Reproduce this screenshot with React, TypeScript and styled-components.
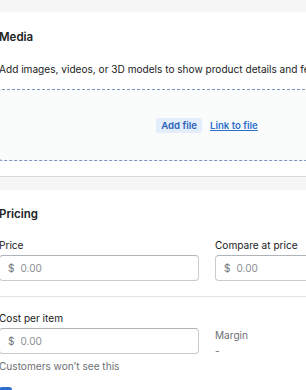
import styled, { createGlobalStyle } from 'styled-components';

const GlobalStyle = createGlobalStyle`
  html, body {
    margin: 0;
    padding: 0;
    background: #f6f6f7;
    overflow: hidden;
  }
  body {
    font-family: Inter, 'Liberation Sans', sans-serif;
    color: #202223;
  }
`;

const Page = styled.div`
  width: 456px;
  margin-left: -21px;
  padding-top: 12px;
  display: flex;
  flex-direction: column;
  gap: 14px;
`;

const Card = styled.section`
  background: #ffffff;
  box-shadow: 0 1px 0 rgba(0, 0, 0, 0.12);
`;

const Section = styled.div<{ $top?: number; $bottom?: number; $divider?: boolean }>`
  padding: ${(p) => p.$top ?? 16}px 20px ${(p) => p.$bottom ?? 16}px;
  border-top: ${(p) => (p.$divider ? '1px solid #e1e3e5' : 'none')};
`;

const Title = styled.h2`
  margin: 0;
  font-size: 11.5px;
  line-height: 16px;
  font-weight: 600;
`;

const Text = styled.p`
  margin: 16px 0 0;
  font-size: 10.1px;
  line-height: 16px;
  white-space: nowrap;
`;

const DropZone = styled.div`
  margin-top: 12px;
  height: 70px;
  border: 1px dashed #7d93c2;
  border-radius: 3px;
  background: #fafbfb;
  display: flex;
  align-items: center;
  justify-content: center;
  gap: 8px;
`;

const AddButton = styled.button`
  border: none;
  background: #e3edfb;
  color: #2a62b8;
  font-family: inherit;
  font-size: 9.6px;
  font-weight: 600;
  line-height: 11px;
  padding: 2px 5px;
  border-radius: 3px;
`;

const LinkText = styled.a`
  color: #2c6ecb;
  font-size: 9.6px;
  font-weight: 600;
  text-decoration: underline;
`;

const Row = styled.div<{ $gapTop?: number }>`
  display: grid;
  grid-template-columns: 1fr 1fr;
  column-gap: 16px;
  margin-top: ${(p) => p.$gapTop ?? 15}px;
`;

const Field = styled.div`
  display: flex;
  flex-direction: column;
`;

const Label = styled.label`
  font-size: 10.1px;
  line-height: 16px;
  margin-bottom: 2px;
`;

const Input = styled.div`
  height: 26px;
  box-sizing: border-box;
  border: 1px solid #c9cccf;
  border-top-color: #aeb4b9;
  border-radius: 4px;
  display: flex;
  align-items: center;
  padding-left: 8px;
  gap: 6px;
  font-size: 10.1px;
`;

const Prefix = styled.span`
  color: #6d7175;
`;

const Placeholder = styled.span`
  color: #8c9196;
`;

const Help = styled.div`
  margin-top: 4px;
  font-size: 10.1px;
  line-height: 16px;
  color: #6d7175;
`;

const MarginCol = styled.div`
  padding-top: 17px;
  font-size: 10.1px;
  line-height: 16px;
  color: #6d7175;
  display: flex;
  flex-direction: column;
`;

const CheckRow = styled.label`
  display: flex;
  align-items: flex-start;
  gap: 8px;
  margin-top: 13px;
  font-size: 10.1px;
  line-height: 16px;
`;

const CheckBox = styled.span`
  width: 13px;
  height: 13px;
  border-radius: 3px;
  background: #2c6ecb;
  flex: none;
`;

const CheckLabel = styled.span`
  padding-top: 6px;
`;

const PriceInput = ({ label }: { label: string }) => (
  <Field>
    <Label>{label}</Label>
    <Input>
      <Prefix>$</Prefix>
      <Placeholder>0.00</Placeholder>
    </Input>
  </Field>
);

export default function App() {
  return (
    <>
      <GlobalStyle />
      <Page>
        <Card>
          <Section $top={17} $bottom={15}>
            <Title>Media</Title>
            <Text>Add images, videos, or 3D models to show product details and features.</Text>
            <DropZone>
              <AddButton>Add file</AddButton>
              <LinkText>Link to file</LinkText>
            </DropZone>
          </Section>
        </Card>

        <Card>
          <Section $top={16} $bottom={15}>
            <Title>Pricing</Title>
            <Row>
              <PriceInput label="Price" />
              <PriceInput label="Compare at price" />
            </Row>
          </Section>
          <Section $divider $top={13}>
            <Row $gapTop={0}>
              <Field>
                <PriceInput label="Cost per item" />
                <Help>Customers won’t see this</Help>
              </Field>
              <MarginCol>
                <span>Margin</span>
                <span>-</span>
              </MarginCol>
            </Row>
            <CheckRow>
              <CheckBox />
              <CheckLabel>Charge tax on this product</CheckLabel>
            </CheckRow>
          </Section>
        </Card>
      </Page>
    </>
  );
}
